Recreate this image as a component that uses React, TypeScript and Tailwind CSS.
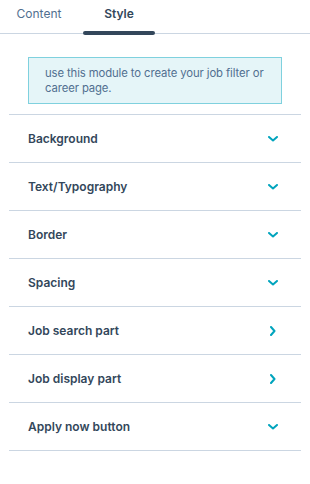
import React from "react";

const rows: { label: string; dir: "down" | "right" }[] = [
  { label: "Background", dir: "down" },
  { label: "Text/Typography", dir: "down" },
  { label: "Border", dir: "down" },
  { label: "Spacing", dir: "down" },
  { label: "Job search part", dir: "right" },
  { label: "Job display part", dir: "right" },
  { label: "Apply now button", dir: "down" },
];

function Chevron({ dir }: { dir: "down" | "right" }) {
  if (dir === "down") {
    return (
      <svg width="10" height="6" viewBox="0 0 10 6" fill="none">
        <path d="M1 1l4 3.5L9 1" stroke="#00a4bd" strokeWidth="2" strokeLinecap="round" strokeLinejoin="round" />
      </svg>
    );
  }
  return (
    <svg width="6" height="10" viewBox="0 0 6 10" fill="none">
      <path d="M1 1l3.5 4L1 9" stroke="#00a4bd" strokeWidth="2" strokeLinecap="round" strokeLinejoin="round" />
    </svg>
  );
}

export default function App() {
  return (
    <div
      className="w-[310px] h-[484px] bg-white overflow-hidden"
      style={{ fontFamily: "Inter, 'Noto Sans', sans-serif" }}
    >
      <div className="flex h-[34px] border-b border-[#cbd6e2] pl-[3px] gap-[8px]">
        <div className="w-[72px] flex items-start justify-center pt-[5px] text-[12px] text-[#516f90]">
          Content
        </div>
        <div className="relative w-[72px] flex items-start justify-center pt-[5px] text-[12px] font-semibold text-[#33475b]">
          Style
          <div className="absolute left-0 right-0 -bottom-[2px] h-[4px] rounded-full bg-[#33475b]" />
        </div>
      </div>
      <div className="pt-[23px]">
        <div className="mx-[28px] h-[47px] border border-[#7fd1de] bg-[#e5f5f8] pl-[16px] pr-[6px] pt-[8px] text-[11.3px] tracking-[-0.1px] leading-[15px] text-[#516f90]">
          use this module to create your job filter or career page.
        </div>
      </div>
      <div className="mx-[9px] mt-[10px] border-t border-[#cbd6e2]">
        {rows.map((r) => (
          <div
            key={r.label}
            className="flex h-[48px] items-center justify-between border-b border-[#cbd6e2] pl-[19px] pr-[23px]"
          >
            <span className="text-[12px] font-semibold text-[#33475b]">{r.label}</span>
            <span className="flex w-[10px] justify-center">
              <Chevron dir={r.dir} />
            </span>
          </div>
        ))}
      </div>
    </div>
  );
}
